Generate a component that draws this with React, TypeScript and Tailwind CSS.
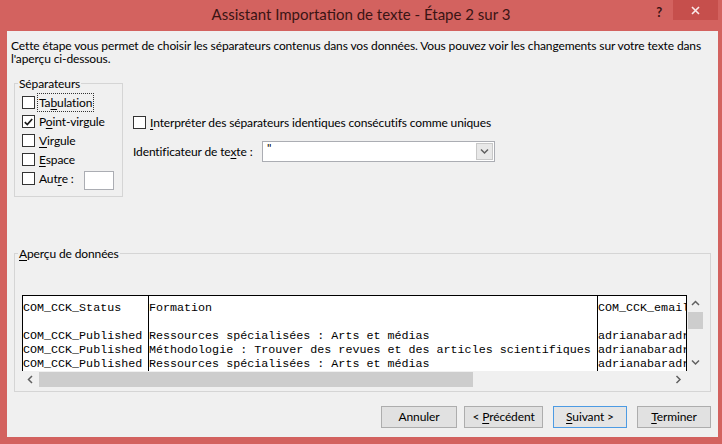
import React from "react";

const U = ({ c }: { c: string }) => (
  <span className="underline decoration-1 underline-offset-[2px]">{c}</span>
);

const Box = ({ checked = false }: { checked?: boolean }) => (
  <span className="flex h-[13px] w-[13px] shrink-0 items-center justify-center border border-[#333333] bg-white">
    {checked && (
      <svg width="9" height="8" viewBox="0 0 9 8">
        <path d="M0.8 4.2 L3.3 6.6 L8.2 1" fill="none" stroke="#1a1a1a" strokeWidth="1.7" />
      </svg>
    )}
  </span>
);

const Chevron = ({ dir }: { dir: "up" | "down" | "left" | "right" }) => {
  const paths = {
    up: "M1 5 L4.5 1.5 L8 5",
    down: "M1 1.5 L4.5 5 L8 1.5",
    left: "M5 1 L1.5 4.5 L5 8",
    right: "M1.5 1 L5 4.5 L1.5 8",
  };
  const vert = dir === "up" || dir === "down";
  return (
    <svg width={vert ? 9 : 7} height={vert ? 7 : 9} viewBox={vert ? "0 0 9 7" : "0 0 7 9"}>
      <path d={paths[dir]} fill="none" stroke="#606060" strokeWidth="1.5" />
    </svg>
  );
};

const SepRow = ({ checked, children }: { checked?: boolean; children: React.ReactNode }) => (
  <div className="flex h-[19px] items-center">
    <Box checked={checked} />
    <span className="ml-[4px]">{children}</span>
  </div>
);

const rows: [string, string, string][] = [
  ["COM_CCK_Status", "Formation", "COM_CCK_email"],
  ["", "", ""],
  ["COM_CCK_Published", "Ressources spécialisées : Arts et médias", "adrianabaradran@umontreal.ca"],
  ["COM_CCK_Published", "Méthodologie : Trouver des revues et des articles scientifiques", "adrianabaradran@umontreal.ca"],
  ["COM_CCK_Published", "Ressources spécialisées : Arts et médias", "adrianabaradran@umontreal.ca"],
];

const Col = ({ idx, w, border }: { idx: number; w: string; border?: boolean }) => (
  <div className={`${w} shrink-0 overflow-hidden pt-[5px] ${border ? "border-l border-black" : ""}`}>
    {rows.map((r, i) => (
      <div key={i} className="h-[14px] whitespace-pre leading-[14px]">
        {r[idx] || " "}
      </div>
    ))}
  </div>
);

const Btn = ({ w, def, children }: { w: string; def?: boolean; children: React.ReactNode }) => (
  <div
    className={`${w} flex h-[22px] items-center justify-center border ${
      def ? "border-[#4d9be3] bg-[#e5e5e5]" : "border-[#adadad] bg-[#e1e1e1]"
    }`}
  >
    <span className="whitespace-pre">{children}</span>
  </div>
);

export default function App() {
  return (
    <div className="flex h-[444px] w-[722px] flex-col bg-[#d3625f] font-['Lato',sans-serif] text-[12px] tracking-[-0.12px] text-black">
      {/* title bar */}
      <div className="grid h-[31px] shrink-0 grid-cols-[1fr_auto_1fr]">
        <div />
        <div className="flex items-center pb-[2px] text-[15px] tracking-normal text-[#3a1414]">
          Assistant Importation de texte - Étape 2 sur 3
        </div>
        <div className="flex items-start justify-end pr-[4px]">
          <span className="mr-[11px] mt-[3px] text-[13px] font-bold leading-[18px] text-[#3a1414]">?</span>
          <div className="flex h-[20px] w-[45px] items-center justify-center bg-[#c64f4c]">
            <svg width="9" height="9" viewBox="0 0 9 9">
              <path d="M1 1 L8 8 M8 1 L1 8" stroke="#fbeaea" strokeWidth="1.6" />
            </svg>
          </div>
        </div>
      </div>

      {/* client */}
      <div className="ml-[7px] flex h-[406px] w-[711px] shrink-0 flex-col bg-[#f0f0f0]">
        <div className="pl-[4px] pt-[8px] leading-[13px]">
          <div className="whitespace-nowrap">
            Cette étape vous permet de choisir les séparateurs contenus dans vos données. Vous pouvez voir les changements sur votre texte dans
          </div>
          <div className="whitespace-nowrap">l'aperçu ci-dessous.</div>
        </div>

        <div className="mt-[11px] flex items-start">
          <fieldset className="ml-[7px] w-[109px] border border-[#d5d5d5] pb-[8px] pl-[7px] pt-[2px]">
            <legend className="ml-[-4px] px-[1px] leading-[15px]">Séparateurs</legend>
            <SepRow>
              <span className="outline outline-1 outline-dotted outline-[#333] outline-offset-[1px]">
                Ta<U c="b" />ulation
              </span>
            </SepRow>
            <SepRow checked>
              P<U c="o" />int-virgule
            </SepRow>
            <SepRow>
              <U c="V" />irgule
            </SepRow>
            <SepRow>
              <U c="E" />space
            </SepRow>
            <div className="flex h-[19px] items-center">
              <Box />
              <span className="ml-[4px]">
                Aut<U c="r" />e :
              </span>
              <span className="ml-[10px] h-[19px] w-[30px] translate-y-[2px] border border-[#abadb3] bg-white" />
            </div>
          </fieldset>

          <div className="ml-[10px] pt-[37px]">
            <div className="flex h-[19px] items-center">
              <Box />
              <span className="ml-[4px]">
                <U c="I" />nterpréter des séparateurs identiques consécutifs comme uniques
              </span>
            </div>
            <div className="mt-[9px] flex items-center">
              <span className="w-[129px]">
                Identificateur de te<U c="x" />te :
              </span>
              <div className="flex h-[21px] w-[233px] border border-[#abadb3] bg-white">
                <span className="flex-1 pl-[4px] leading-[12px]">"</span>
                <span className="m-[1px] flex w-[17px] items-center justify-center border border-[#c8c8c8] bg-[#e8e8e8]">
                  <Chevron dir="down" />
                </span>
              </div>
            </div>
          </div>
        </div>

        <fieldset className="ml-[7px] mt-[49px] w-[697px] border border-[#d5d5d5] pb-[4px] pl-[7px]">
          <legend className="ml-[-4px] px-[1px] leading-[15px]">
            <U c="A" />perçu de données
          </legend>
          <div className="mt-[34px] flex">
            <div className="flex w-[665px] flex-col">
              <div className="flex h-[76px] border-l border-r border-t border-black bg-white font-['Liberation_Mono',monospace] text-[11.7px] tracking-normal">
                <Col idx={0} w="w-[125px]" />
                <Col idx={1} w="w-[449px]" border />
                <Col idx={2} w="w-[89px]" border />
              </div>
              <div className="flex h-[16px] items-center">
                <div className="flex w-[17px] justify-center">
                  <Chevron dir="left" />
                </div>
                <div className="h-[15px] w-[434px] bg-[#cdcdcd]" />
                <div className="flex-1" />
                <div className="flex w-[17px] justify-center">
                  <Chevron dir="right" />
                </div>
              </div>
            </div>
            <div className="flex h-[76px] w-[17px] flex-col">
              <div className="flex h-[17px] items-center justify-center">
                <Chevron dir="up" />
              </div>
              <div className="mx-[1px] h-[17px] bg-[#cdcdcd]" />
              <div className="flex-1" />
              <div className="flex h-[17px] items-center justify-center">
                <Chevron dir="down" />
              </div>
            </div>
          </div>
        </fieldset>

        <div className="mt-[14px] flex justify-end pr-[7px]">
          <Btn w="w-[76px]">Annuler</Btn>
          <div className="w-[7px]" />
          <Btn w="w-[79px]">
            {"< "}
            <U c="P" />
            récédent
          </Btn>
          <div className="w-[10px]" />
          <Btn w="w-[74px]" def>
            <U c="S" />
            {"uivant >"}
          </Btn>
          <div className="w-[10px]" />
          <Btn w="w-[74px]">
            <U c="T" />
            erminer
          </Btn>
        </div>
      </div>
    </div>
  );
}
